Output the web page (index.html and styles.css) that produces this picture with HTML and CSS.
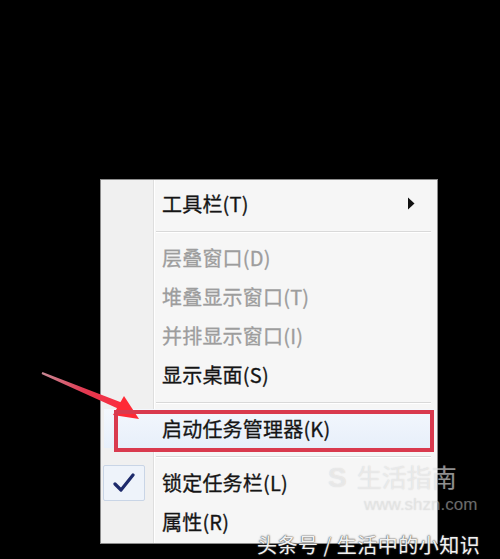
FILE: index.html
```html
<!DOCTYPE html>
<html lang="zh-CN">
<head>
	<meta charset="UTF-8">
	<meta name="viewport" content="width=device-width, initial-scale=1.0">
	<title>任务栏菜单</title>
	<link rel="stylesheet" href="styles.css">
</head>
<body>
	<div class="desktop">
		<div class="menu">
			<div class="item">
				<span class="icon"></span>
				<span class="label">工具栏(T)</span>
				<svg class="sub" width="8" height="13" viewBox="0 0 8 13"><path d="M1 0.5 L7.5 6.5 L1 12.5 Z" fill="#111"/></svg>
			</div>
			<div class="sep"></div>
			<div class="item off"><span class="icon"></span><span class="label">层叠窗口(D)</span></div>
			<div class="item off"><span class="icon"></span><span class="label">堆叠显示窗口(T)</span></div>
			<div class="item off"><span class="icon"></span><span class="label">并排显示窗口(I)</span></div>
			<div class="item"><span class="icon"></span><span class="label">显示桌面(S)</span></div>
			<div class="sep"></div>
			<div class="item hot"><span class="icon"></span><span class="label">启动任务管理器(K)</span></div>
			<div class="sep"></div>
			<div class="item">
				<span class="icon">
					<span class="check">
						<svg width="22" height="20" viewBox="0 0 22 20"><path d="M2 11 L8 17 L20 2" fill="none" stroke="#1d2a6b" stroke-width="3.2" stroke-linecap="round" stroke-linejoin="round"/></svg>
					</span>
				</span>
				<span class="label">锁定任务栏(L)</span>
			</div>
			<div class="item"><span class="icon"></span><span class="label">属性(R)</span></div>
		</div>

		<!-- 标注：红色箭头和方框 -->
		<svg class="arrow" width="500" height="559" viewBox="0 0 500 559">
			<defs>
				<linearGradient id="shaft" x1="42" y1="373" x2="125" y2="410" gradientUnits="userSpaceOnUse">
					<stop offset="0" stop-color="#c98a96"/>
					<stop offset="0.5" stop-color="#e23a52"/>
					<stop offset="1" stop-color="#ff2a3a"/>
				</linearGradient>
			</defs>
			<path d="M41.6 373.9 L42.4 372.1 L123.4 403.2 L120.6 409.8 Z" fill="url(#shaft)"/>
			<path d="M139 419 L113 415 L124 396 Z" fill="#ff2a36"/>
		</svg>
		<div class="mark-box"></div>

		<div class="watermark">
			<div class="logo"><span class="s">S</span>生活指南</div>
			<div class="url">www.shzn.com</div>
		</div>
		<div class="credit">头条号 / 生活中的小知识</div>
	</div>
</body>
</html>
```

FILE: styles.css
```css
html, body {
	margin: 0;
	padding: 0;
	background: #000;
	font-family: "Noto Sans CJK SC", "Noto Sans", sans-serif;
}

.desktop {
	position: relative;
	width: 500px;
	height: 559px;
	overflow: hidden;
	background: #000;
}

.menu {
	position: absolute;
	left: 100px;
	top: 179px;
	width: 338px;
	height: 365px;
	box-sizing: border-box;
	padding-top: 4px;
	border: 1px solid #8c8c8c;
	background: linear-gradient(to right, #f0f0f0 0 52px, #dedede 52px 53px, #fff 53px 54px, #f6f6f6 54px);
	box-shadow: 2px 2px 3px rgba(0, 0, 0, 0.4);
}

.item {
	display: flex;
	align-items: center;
	height: 39px;
	font-size: 20px;
	color: #151515;
	-webkit-text-stroke: 0.3px currentColor;
}

.item.off {
	color: #9d9d9d;
}

.item.hot {
	margin: 0 3px;
	background: linear-gradient(#f3f7fd, #e7effa);
}

.item.hot .icon {
	width: 58px;
}

.icon {
	width: 61px;
	height: 100%;
	flex-shrink: 0;
	display: flex;
	align-items: center;
}

.label {
	white-space: nowrap;
	letter-spacing: 0.2px;
}

.sub {
	margin-left: auto;
	margin-right: 22px;
}

.sep {
	height: 1px;
	margin: 8px 6px 5px 55px;
	background: #d9d9d9;
	border-bottom: 1px solid #fff;
}

.check {
	margin-left: 2px;
	width: 42px;
	height: 36px;
	box-sizing: border-box;
	border: 1px solid #c9d5e6;
	border-radius: 2px;
	background: #eef3fa;
	display: flex;
	align-items: center;
	justify-content: center;
}

.arrow {
	position: absolute;
	left: 0;
	top: 0;
	pointer-events: none;
}

.mark-box {
	position: absolute;
	left: 114px;
	top: 410px;
	width: 320px;
	height: 42px;
	box-sizing: border-box;
	border: 4px solid #d93a4e;
}

.watermark {
	position: absolute;
	left: 328px;
	top: 460px;
	color: rgba(255, 255, 255, 0.5);
	text-shadow: 0 0 1px rgba(120, 120, 120, 0.3);
}

.logo {
	font-size: 25px;
	line-height: 32px;
	white-space: nowrap;
}

.logo .s {
	font-family: "Liberation Sans", sans-serif;
	font-weight: bold;
	font-size: 28px;
	margin-right: 10px;
}

.url {
	font-family: "Liberation Sans", sans-serif;
	font-size: 17px;
	line-height: 22px;
	margin-left: 36px;
	color: rgba(255, 255, 255, 0.35);
	white-space: nowrap;
}

.credit {
	position: absolute;
	left: 257px;
	top: 531px;
	font-size: 20px;
	letter-spacing: 0.5px;
	line-height: 28px;
	color: #f2f2f2;
	white-space: nowrap;
	text-shadow: 0 0 2px #555, 0 0 1px #333;
}
```
